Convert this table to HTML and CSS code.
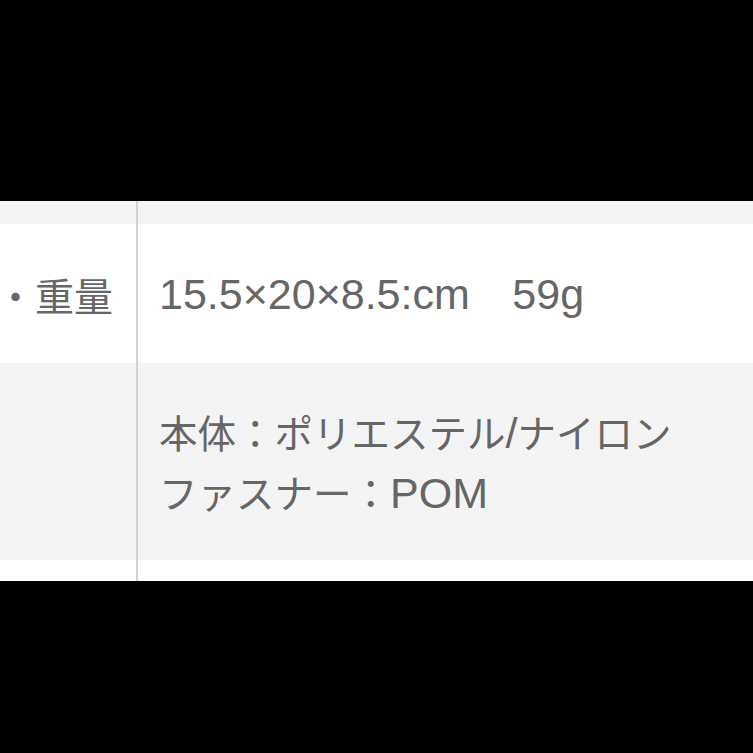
FILE: index.html
```html
<!DOCTYPE html>
<html lang="ja">
<head>
  <meta charset="UTF-8" />
  <meta name="viewport" content="width=device-width, initial-scale=1.0" />
  <title>商品情報</title>
  <link rel="stylesheet" href="styles.css">
</head>
<body>
  <div class="spec">
    <div class="row gray short">
      <div class="label"></div>
      <div class="value"></div>
    </div>
    <div class="row size">
      <div class="label"><span>サイズ・重量</span></div>
      <div class="value"><span class="lat">15.5×20×8.5:cm</span>　<span class="lat">59g</span></div>
    </div>
    <div class="row gray material">
      <div class="label"><span>素材</span></div>
      <div class="value">
        <div>本体：ポリエステル<span class="lat">/</span>ナイロン</div>
        <div>ファスナー：<span class="lat">POM</span></div>
      </div>
    </div>
    <div class="row tail">
      <div class="label"></div>
      <div class="value"></div>
    </div>
  </div>
</body>
</html>
```

FILE: styles.css
```css
body {
  margin: 0;
  padding: 0;
  background: #000;
  height: 753px;
  overflow: hidden;
  font-family: "Noto Sans CJK JP", sans-serif;
}
.spec {
  margin-top: 201px;
  background: #fff;
  color: #666;
}
.row {
  display: flex;
  background: #fff;
}
.row.gray {
  background: #f4f4f4;
}
.label {
  width: 138px;
  flex-shrink: 0;
  border-right: 2px solid #d2d2d2;
  display: flex;
  justify-content: flex-end;
  align-items: center;
  overflow: hidden;
  white-space: nowrap;
  padding-right: 23px;
  box-sizing: border-box;
  font-size: 39px;
}
.material .label span {
  visibility: hidden;
}
.value {
  flex: 1;
  display: flex;
  flex-direction: column;
  justify-content: center;
  padding-left: 21px;
  font-size: 38.5px;
  line-height: 58px;
  white-space: nowrap;
}
.size .value {
  display: block;
  line-height: 136px;
}
.lat {
  font-family: "Liberation Sans", sans-serif;
  font-size: 43px;
}
.size .lat + .lat {
  margin-left: 4px;
}
.short {
  height: 23px;
}
.size {
  height: 139px;
}
.material {
  height: 197px;
}
.tail {
  height: 21px;
}
```
